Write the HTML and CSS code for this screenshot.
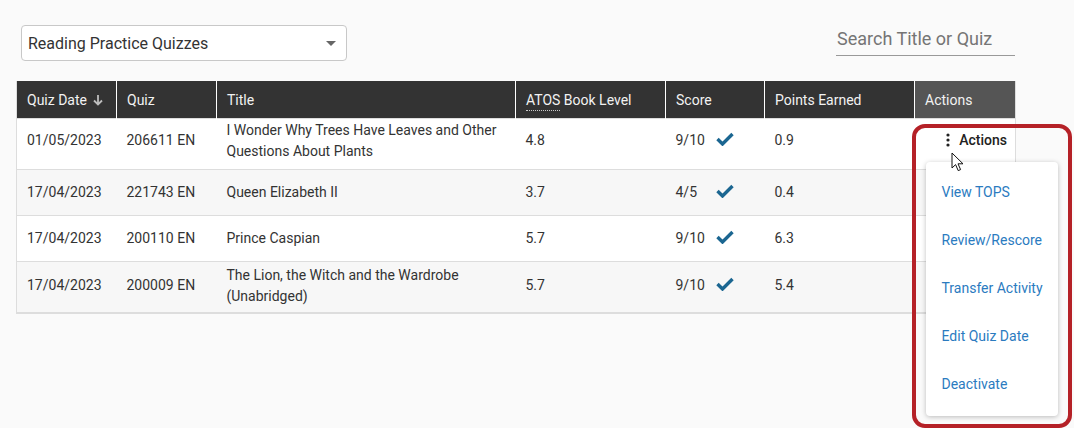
FILE: index.html
```html
<html>
  <head>
    <link rel="stylesheet" href="styles.css">
  </head>
  <body>
    <div class="page">
      <div class="toolbar">
        <div class="select">
          <span>Reading Practice Quizzes</span>
          <span class="caret"></span>
        </div>
        <input class="search" type="text" placeholder="Search Title or Quiz" />
      </div>

      <table>
        <colgroup>
          <col style="width: 100px" />
          <col style="width: 100px" />
          <col style="width: 299px" />
          <col style="width: 150px" />
          <col style="width: 99px" />
          <col style="width: 150px" />
          <col style="width: 101px" />
        </colgroup>
        <thead>
          <tr>
            <th>
              Quiz Date
              <svg class="sort" width="10" height="12" viewBox="0 0 10 12">
                <path d="M5 1v9M1 6.5l4 4 4-4" fill="none" stroke="#bdbdbd" stroke-width="1.8" />
              </svg>
            </th>
            <th>Quiz</th>
            <th>Title</th>
            <th><span class="abbr">ATOS</span> Book Level</th>
            <th>Score</th>
            <th>Points Earned</th>
            <th class="th-actions">Actions</th>
          </tr>
        </thead>
        <tbody>
          <tr class="row-tall row-first">
            <td>01/05/2023</td>
            <td>206611 EN</td>
            <td>I Wonder Why Trees Have Leaves and Other Questions About Plants</td>
            <td>4.8</td>
            <td><span class="score">9/10</span><svg class="check" width="18" height="14" viewBox="0 0 18 14"><path d="M1.5 7l5 5L16.5 2" fill="none" stroke="#1b6691" stroke-width="3.4" /></svg></td>
            <td>0.9</td>
            <td class="actions">
              <div class="menu-anchor">
                <button class="actions-btn">
                  <svg width="4" height="14" viewBox="0 0 4 14">
                    <circle cx="2" cy="2" r="1.6" fill="#222" />
                    <circle cx="2" cy="7" r="1.6" fill="#222" />
                    <circle cx="2" cy="12" r="1.6" fill="#222" />
                  </svg>
                  Actions
                </button>
                <svg class="cursor" width="14" height="20" viewBox="0 0 14 20">
                  <path d="M1 1v15l3.6-3.4 2.6 6 2.4-1-2.6-5.8H12z" fill="#fff" stroke="#111" stroke-width="1" stroke-linejoin="round" />
                </svg>
                <ul class="menu">
                  <li>View TOPS</li>
                  <li>Review/Rescore</li>
                  <li>Transfer Activity</li>
                  <li>Edit Quiz Date</li>
                  <li>Deactivate</li>
                </ul>
                <div class="highlight"></div>
              </div>
            </td>
          </tr>
          <tr>
            <td>17/04/2023</td>
            <td>221743 EN</td>
            <td>Queen Elizabeth II</td>
            <td>3.7</td>
            <td><span class="score">4/5</span><svg class="check" width="18" height="14" viewBox="0 0 18 14"><path d="M1.5 7l5 5L16.5 2" fill="none" stroke="#1b6691" stroke-width="3.4" /></svg></td>
            <td>0.4</td>
            <td></td>
          </tr>
          <tr>
            <td>17/04/2023</td>
            <td>200110 EN</td>
            <td>Prince Caspian</td>
            <td>5.7</td>
            <td><span class="score">9/10</span><svg class="check" width="18" height="14" viewBox="0 0 18 14"><path d="M1.5 7l5 5L16.5 2" fill="none" stroke="#1b6691" stroke-width="3.4" /></svg></td>
            <td>6.3</td>
            <td></td>
          </tr>
          <tr class="row-tall row-last">
            <td>17/04/2023</td>
            <td>200009 EN</td>
            <td>The Lion, the Witch and the Wardrobe (Unabridged)</td>
            <td>5.7</td>
            <td><span class="score">9/10</span><svg class="check" width="18" height="14" viewBox="0 0 18 14"><path d="M1.5 7l5 5L16.5 2" fill="none" stroke="#1b6691" stroke-width="3.4" /></svg></td>
            <td>5.4</td>
            <td></td>
          </tr>
        </tbody>
      </table>
    </div>
  </body>
</html>
```

FILE: styles.css
```css
body {
  font-family: Roboto, "Liberation Sans", sans-serif;
  background-color: #fafafa;
  color: #333;
  margin: 0;
}
.page {
  width: 999px;
  padding: 25px 0 0 16px;
}
.toolbar {
  display: flex;
  justify-content: space-between;
  align-items: flex-start;
  padding-left: 5px;
  margin-bottom: 20px;
}
.select {
  width: 326px;
  height: 36px;
  box-sizing: border-box;
  border: 1px solid #c8c8c8;
  border-radius: 4px;
  background-color: #fff;
  display: flex;
  align-items: center;
  justify-content: space-between;
  padding: 0 10px 0 6px;
  font-size: 16px;
  color: #333;
}
.caret {
  width: 0;
  height: 0;
  border-left: 5px solid transparent;
  border-right: 5px solid transparent;
  border-top: 5px solid #666;
}
.search {
  width: 179px;
  height: 32px;
  margin-top: -1px;
  padding: 0 0 2px 1px;
  border: none;
  border-bottom: 1px solid #999;
  background: transparent;
  font-family: inherit;
  font-size: 18px;
  outline: none;
}
.search::placeholder {
  color: #757575;
}
table {
  width: 999px;
  border-collapse: collapse;
  table-layout: fixed;
  font-size: 14px;
  border-left: 1px solid #ddd;
  border-right: 1px solid #ddd;
  border-bottom: 2px solid #ddd;
}
th {
  background-color: #333;
  color: #f2f2f2;
  font-weight: normal;
  text-align: left;
  height: 37px;
  padding: 2px 10px 0;
  box-sizing: border-box;
  border-left: 1px solid #fff;
}
th:first-child {
  border-left: none;
}
.th-actions {
  background-color: #555;
}
.sort {
  margin-left: 3px;
  vertical-align: -1px;
}
.abbr {
  border-bottom: 1px dotted #ccc;
  padding-bottom: 2px;
}
td {
  height: 46px;
  padding: 4px 10px;
  box-sizing: border-box;
  line-height: 21px;
  border-top: 1px solid #ddd;
  color: #333;
}
.row-tall td {
  height: 51px;
}
.row-first td {
  padding: 1px 10px 7px;
}
.row-last td {
  padding: 3px 10px 5px;
}
tbody tr:nth-child(even) td {
  background-color: #f7f7f7;
}
tbody tr:nth-child(odd) td {
  background-color: #fff;
}
.score {
  display: inline-block;
  width: 40px;
}
.check {
  vertical-align: -1px;
}
.row-first .actions {
  padding: 0;
  vertical-align: top;
}
.menu-anchor {
  position: relative;
  height: 50px;
}
.actions-btn {
  position: absolute;
  right: 8px;
  top: 13px;
  border: none;
  background: none;
  padding: 0;
  font-family: inherit;
  font-size: 14px;
  font-weight: 500;
  color: #222;
  display: flex;
  align-items: center;
  gap: 9px;
  cursor: pointer;
}
.cursor {
  position: absolute;
  left: 36px;
  top: 33px;
  z-index: 3;
}
.menu {
  position: absolute;
  left: 11px;
  top: 43px;
  width: 132px;
  margin: 0;
  padding: 7px 0;
  list-style: none;
  background-color: #fff;
  border-radius: 4px;
  box-shadow: 0 1px 5px rgba(0, 0, 0, 0.25);
  z-index: 2;
}
.menu li {
  height: 48px;
  line-height: 47px;
  padding-left: 16px;
  color: #2b7bbf;
  font-size: 14px;
}
.highlight {
  position: absolute;
  left: -3px;
  top: 5px;
  width: 160px;
  height: 304px;
  box-sizing: border-box;
  border: 4px solid #b52127;
  border-radius: 13px;
  z-index: 4;
}
```
